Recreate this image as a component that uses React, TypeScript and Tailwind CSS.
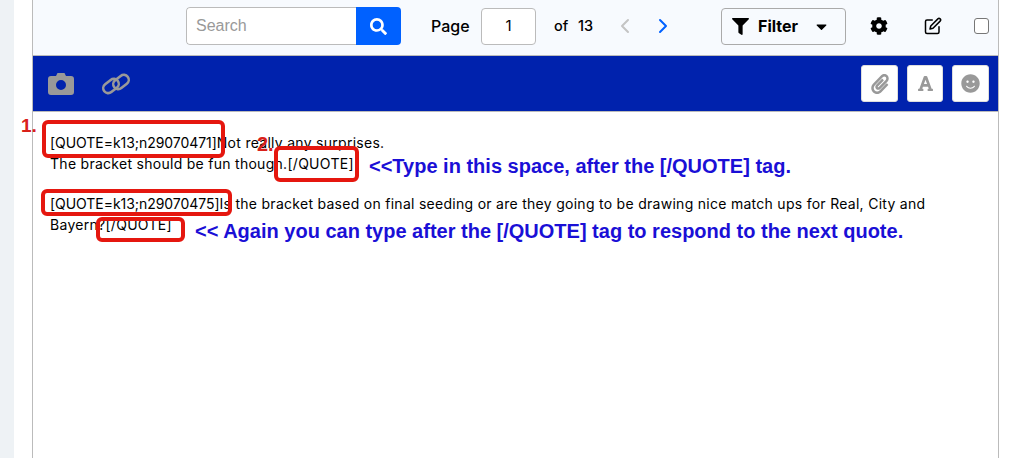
import React from "react";
import { FaPaperclip, FaFont, FaSmile, FaFilter, FaCog, FaSearch, FaCaretDown } from "react-icons/fa";
import { FiEdit } from "react-icons/fi";
import { ChevronLeft, ChevronRight } from "lucide-react";

const font = "font-['Inter','Noto_Sans',sans-serif]";

function Box({ className }: { className: string }) {
  return <div className={`absolute rounded-[6px] border-[4px] border-[#e5170f] ${className}`} />;
}

function Note({ className, children }: { className: string; children: React.ReactNode }) {
  return (
    <div className={`absolute whitespace-nowrap font-['Liberation_Sans',sans-serif] font-bold ${className}`}>
      {children}
    </div>
  );
}

function IconBtn({ className, children }: { className: string; children: React.ReactNode }) {
  return (
    <div className={`flex h-[37px] items-center justify-center rounded-[3px] border border-[#ddd] bg-white text-[#999] ${className}`}>
      {children}
    </div>
  );
}

function Camera() {
  return (
    <svg width="26" height="22" viewBox="0 0 26 22">
      <path
        fillRule="evenodd"
        fill="#999"
        d="M3 3h5l1.5-3h7L18 3h5a3 3 0 0 1 3 3v13a3 3 0 0 1-3 3H3a3 3 0 0 1-3-3V6a3 3 0 0 1 3-3zM13 7a5 5 0 1 0 0 10a5 5 0 0 0 0-10z"
      />
    </svg>
  );
}

function Chain() {
  return (
    <svg width="30" height="24" viewBox="0 0 30 24" fill="none" stroke="#999" strokeWidth="2.6">
      <rect x="1.5" y="9" width="17" height="10" rx="5" transform="rotate(-38 10 14)" />
      <rect x="11.5" y="5" width="17" height="10" rx="5" transform="rotate(-38 20 10)" />
    </svg>
  );
}

function Tag({ children }: { children: React.ReactNode }) {
  return <span className="tracking-[-0.05px]">{children}</span>;
}

export default function App() {
  return (
    <div className={`relative flex h-[458px] w-[1013px] overflow-hidden bg-white text-black ${font}`}>
      <div className="w-[14px] shrink-0 bg-[#eef2f5]" />
      <div className="w-[18px] shrink-0 bg-white" />
      <div className="flex w-[967px] shrink-0 flex-col border-x border-[#bbb]">
        <div className="flex h-[55px] shrink-0 items-center bg-[#f7fafe] pb-[3px] pl-[153px]">
          <div className="flex h-[38px] w-[215px] overflow-hidden rounded-[4px]">
            <div className="flex w-[170px] items-center rounded-l-[4px] border border-r-0 border-[#bbb] bg-white pl-[9px] font-['Liberation_Sans',sans-serif] text-[16px] text-[#999]">
              Search
            </div>
            <div className="flex w-[45px] items-center justify-center bg-[#0061ff] text-white">
              <FaSearch size={17} />
            </div>
          </div>
          <span className="ml-[30px] w-[50px] text-[16px] font-medium">Page</span>
          <div className="flex h-[37px] w-[55px] items-center justify-center rounded-[4px] border border-[#bbb] bg-white text-[15px]">
            1
          </div>
          <span className="ml-[18px] w-[24px] text-[14.5px] font-medium">of</span>
          <span className="w-[30px] text-[14.5px] font-medium">13</span>
          <ChevronLeft size={24} strokeWidth={2} className="ml-[5px] text-[#c4c4c4]" />
          <ChevronRight size={24} strokeWidth={2} className="ml-[14px] text-[#0061ff]" />
          <div className="ml-[46px] flex h-[37px] w-[125px] items-center rounded-[4px] border border-[#aaa] pl-[10px]">
            <FaFilter size={17} />
            <span className="ml-[9px] text-[16px] font-bold">Filter</span>
            <FaCaretDown size={17} className="ml-[15px]" />
          </div>
          <FaCog size={18} className="ml-[24px]" />
          <FiEdit size={18} className="ml-[36px]" />
          <div className="ml-[32px] h-[16px] w-[15px] rounded-[3px] border border-[#777] bg-white" />
        </div>
        <div className="flex h-[57px] shrink-0 items-center justify-between border-y border-[#bbb] bg-[#0022ad] pr-[9px] pl-[15px]">
          <div className="flex items-center gap-[27px]">
            <Camera />
            <Chain />
          </div>
          <div className="flex gap-[9px]">
            <IconBtn className="w-[37px]"><FaPaperclip size={20} /></IconBtn>
            <IconBtn className="w-[36px]"><FaFont size={17} /></IconBtn>
            <IconBtn className="w-[37px]"><FaSmile size={19} /></IconBtn>
          </div>
        </div>
        <div className="pt-[20px] pl-[17px] text-[14px] leading-[21px] tracking-[0.28px]">
          <p><Tag>[QUOTE=k13;n29070471]</Tag>Not really any surprises.</p>
          <p>The bracket should be fun though.[/QUOTE]</p>
          <p className="mt-[19px]">
            <Tag>[QUOTE=k13;n29070475]</Tag>Is the bracket based on final seeding or are they going to be drawing nice match ups for Real, City and
          </p>
          <p>Bayern?[/QUOTE]</p>
        </div>
      </div>
      <div className="flex-1 bg-white" />

      <Box className="top-[120px] left-[42px] h-[38px] w-[183px]" />
      <Box className="top-[146px] left-[274px] h-[36px] w-[85px]" />
      <Box className="top-[189px] left-[41px] h-[27px] w-[191px]" />
      <Box className="top-[217px] left-[96px] h-[25px] w-[89px]" />
      <Note className="top-[112px] left-[21px] text-[19px] text-[#d9201a]">1.</Note>
      <Note className="top-[129px] left-[257px] text-[20px] text-[#d9201a]">2.</Note>
      <Note className="top-[151px] left-[369px] text-[20px] text-[#1a0fd6]">{"<<Type in this space, after the [/QUOTE] tag."}</Note>
      <Note className="top-[216px] left-[195px] text-[20px] text-[#1a0fd6]">{"<< Again you can type after the [/QUOTE] tag to respond to the next quote."}</Note>
    </div>
  );
}
